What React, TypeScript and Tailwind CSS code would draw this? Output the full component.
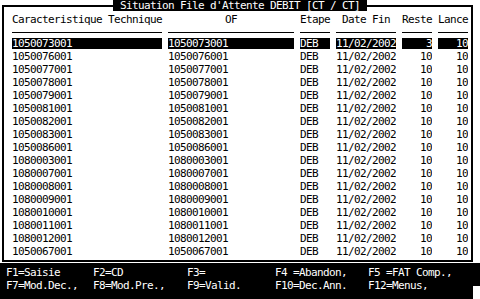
const ofs = [
  "1050073001",
  "1050076001",
  "1050077001",
  "1050078001",
  "1050079001",
  "1050081001",
  "1050082001",
  "1050083001",
  "1050086001",
  "1080003001",
  "1080007001",
  "1080008001",
  "1080009001",
  "1080010001",
  "1080011001",
  "1080012001",
  "1050067001",
];

const keys = [
  ["F1=Saisie", "F2=CD", "F3=", "F4 =Abandon,", "F5 =FAT Comp.,"],
  ["F7=Mod.Dec.,", "F8=Mod.Pre.,", "F9=Valid.", "F10=Dec.Ann.", "F12=Menus,"],
];

const cols = "grid grid-cols-[150px_126px_30px_60px_30px_30px] gap-x-[6px]";
const cell = "mt-px h-[11px] overflow-hidden leading-[11px] whitespace-pre";

export default function App() {
  return (
    <div
      className="relative h-[299px] w-[480px] overflow-hidden bg-white text-[11px] tracking-[-0.62px] text-black"
      style={{ fontFamily: '"DejaVu Sans Mono", "Liberation Mono", monospace' }}
    >
      <div className="ml-[2px] mt-[5px] h-[257px] w-[471px] border-2 border-black pl-[8px] pt-[6px]">
        <div className={`${cols} h-[13px] leading-[13px] whitespace-pre`}>
          <span>Caracteristique Technique</span>
          <span className="text-center">OF</span>
          <span>Etape</span>
          <span className="text-center">Date Fin</span>
          <span>Reste</span>
          <span>Lance</span>
        </div>
        <div className={`${cols} mt-[6px]`}>
          {[0, 1, 2, 3, 4, 5].map((i) => (
            <div key={i} className="h-px bg-black" />
          ))}
        </div>
        <div className="mt-[4px] flex flex-col">
          {ofs.map((of, i) => {
            const sel = i === 0 ? "bg-black text-white" : "";
            return (
              <div key={of} className={`${cols} h-[13px]`}>
                <div className={`${cell} ${sel}`}>{of}</div>
                <div className={`${cell} ${sel}`}>{of}</div>
                <div className={`${cell} ${sel}`}>DEB</div>
                <div className={`${cell} ${sel}`}>11/02/2002</div>
                <div className={`${cell} text-right ${sel}`}>{i === 0 ? "3" : "10"}</div>
                <div className={`${cell} text-right ${sel}`}>10</div>
              </div>
            );
          })}
        </div>
      </div>

      <div className="absolute left-[113px] top-0 h-[11px] w-[254px] overflow-hidden bg-black pl-[7px] leading-[11px] whitespace-pre text-white">
        Situation File d'Attente DEBIT [CT / CT]
      </div>

      <div className="relative mt-px h-[36px] bg-black pl-[6px] pt-[3px] text-white">
        {keys.map((row, r) => (
          <div key={r} className="grid h-[13px] grid-cols-[87px_94px_88px_93px_auto] leading-[13px] whitespace-pre">
            {row.map((k) => (
              <span key={k}>{k}</span>
            ))}
          </div>
        ))}
        <div className="absolute bottom-0 right-0 h-[13px] w-[7px] bg-white" />
      </div>
    </div>
  );
}
